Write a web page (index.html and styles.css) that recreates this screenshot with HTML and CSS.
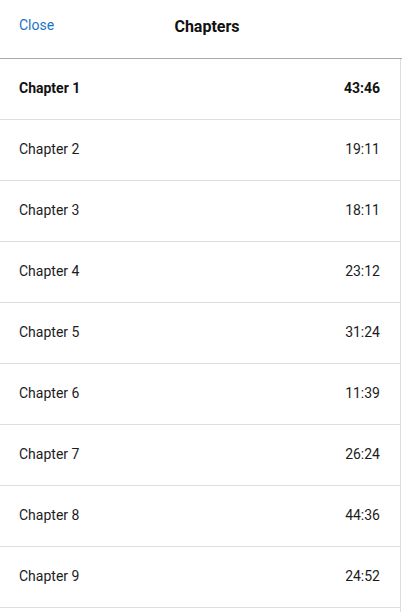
FILE: index.html
```html
<!DOCTYPE html>
<html>
<head>
<meta charset="utf-8">
<link rel="stylesheet" href="styles.css">
</head>
<body>
<div class="sheet">
  <header class="top">
    <span class="close">Close</span>
    <span class="title">Chapters</span>
  </header>
  <ul class="list">
    <li class="row active"><span>Chapter 1</span><span>43:46</span></li>
    <li class="row"><span>Chapter 2</span><span>19:11</span></li>
    <li class="row"><span>Chapter 3</span><span>18:11</span></li>
    <li class="row"><span>Chapter 4</span><span>23:12</span></li>
    <li class="row"><span>Chapter 5</span><span>31:24</span></li>
    <li class="row"><span>Chapter 6</span><span>11:39</span></li>
    <li class="row"><span>Chapter 7</span><span>26:24</span></li>
    <li class="row"><span>Chapter 8</span><span>44:36</span></li>
    <li class="row"><span>Chapter 9</span><span>24:52</span></li>
  </ul>
</div>
</body>
</html>
```
FILE: styles.css
```css
html, body {
  margin: 0;
  padding: 0;
  background: #fff;
  overflow: hidden;
}
body {
  font-family: Roboto, "Liberation Sans", sans-serif;
  color: #1c1c1c;
  height: 612px;
}
.sheet {
  width: 402px;
  height: 612px;
  overflow: hidden;
}
.top {
  position: relative;
  height: 58px;
  border-bottom: 1px solid #aaaaaa;
  display: flex;
  align-items: center;
  justify-content: center;
}
.close {
  position: absolute;
  left: 19px;
  top: 17px;
  font-size: 14px;
  color: #1a73c4;
}
.title {
  font-size: 16px;
  font-weight: 700;
  color: #111;
  margin-left: 12px;
  margin-bottom: 5px;
}
.list {
  list-style: none;
  margin: 0;
  padding: 0;
  width: 400px;
  min-height: 560px;
  border-right: 1px solid #dddddd;
}
.row {
  height: 60px;
  border-bottom: 1px solid #dddddd;
  display: flex;
  align-items: center;
  justify-content: space-between;
  padding: 0 20px 2px 19px;
  box-sizing: content-box;
  height: 58px;
  font-size: 14px;
  color: #1c1c1c;
}
.row.active {
  font-weight: 700;
  color: #111;
}
```
